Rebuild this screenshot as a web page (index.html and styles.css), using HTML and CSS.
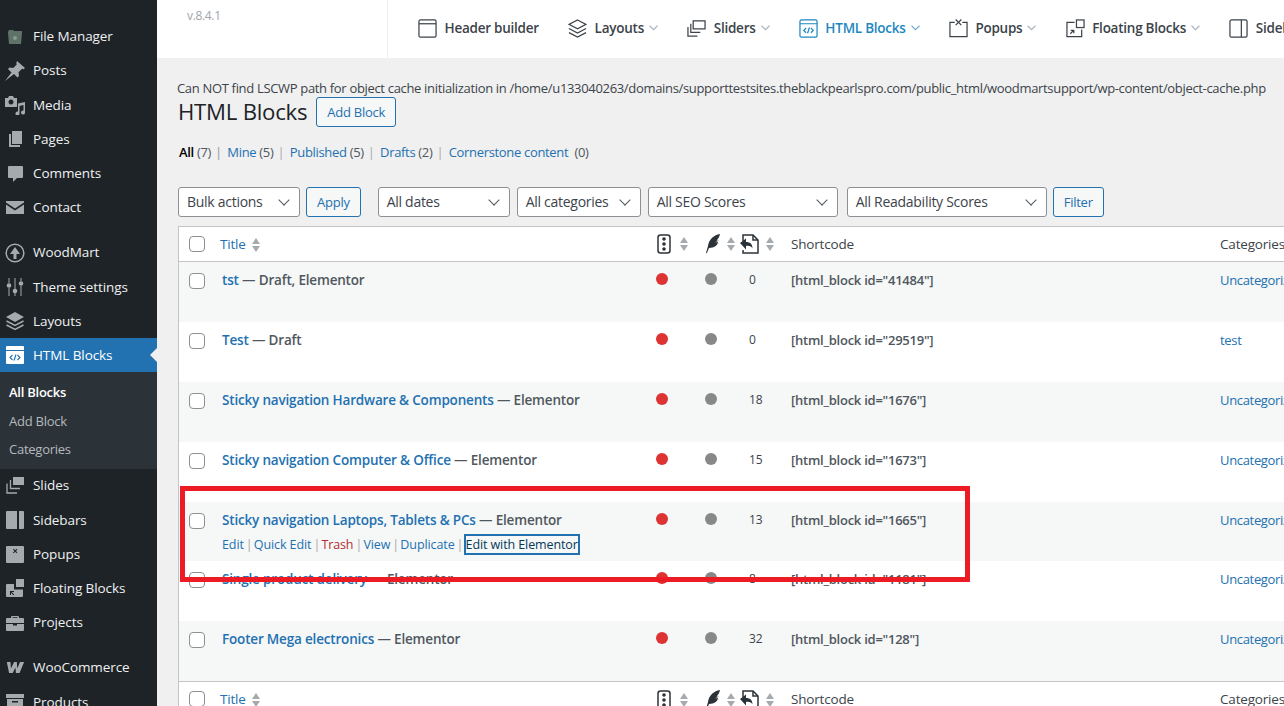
FILE: index.html
```html
<!DOCTYPE html>
<html lang="en">
<head>
<meta charset="utf-8">
<title>HTML Blocks</title>
<link rel="stylesheet" href="styles.css">
</head>
<body>
<div class="app">
  <nav class="side">
    <a class="mi"><svg class="ic" viewBox="0 0 20 20"><path fill="#5f7268" d="M3 5l1-2h4l1 1h8v2l-1 11H4L3 6z"/><circle cx="10" cy="11" r="2" fill="#8a9a90"/></svg>File Manager</a>
    <a class="mi"><svg class="ic" viewBox="0 0 20 20"><path d="M12 0l8 7-1.500 1.200-1.500-.4-3.500 3.500.5 3.700-1.500 1.500-3.500-3.500L0 20l6.500-8.500L3 8l1.500-1.500 3.700.5 3.500-3.500-.4-1.500z"/></svg>Posts</a>
    <a class="mi"><svg class="ic" viewBox="0 0 20 20"><path fill-rule="evenodd" d="M0 3h3l1-2h4l1 2h3v9H0zM6 4.500a2.500 2.500 0 1 0 .01 0z"/><path d="M20 7v10.500a2 2 0 1 1-1.500-1.900V10l-4 1v7.500a2 2 0 1 1-1.500-1.900V8.500z"/></svg>Media</a>
    <a class="mi"><svg class="ic" viewBox="0 0 20 20"><path d="M7 2h10v13H7z"/><path d="M4 5h2v11h9v2H4z"/></svg>Pages</a>
    <a class="mi"><svg class="ic" viewBox="0 0 20 20"><path d="M4 3h13a1 1 0 0 1 1 1v10a1 1 0 0 1-1 1h-5l-4 4v-4H4a1 1 0 0 1-1-1V4a1 1 0 0 1 1-1z"/></svg>Comments</a>
    <a class="mi"><svg class="ic" viewBox="0 0 20 20"><path d="M1 3h18v1.500l-9 6-9-6z"/><path d="M1 6.500l9 6 9-6V16H1z"/></svg>Contact</a>
    <a class="mi gap"><svg class="ic" viewBox="0 0 20 20"><circle cx="10" cy="10" r="8.800" fill="none" stroke="#a7aaad" stroke-width="1.500"/><path d="M10 4l5 7h-3.500v5h-3v-5H5z"/></svg>WoodMart</a>
    <a class="mi"><svg class="ic" viewBox="0 0 20 20"><path d="M3.500 1h1v5h-1zM9.500 1h1v11h-1zM15.500 1h1v3h-1zM3.500 11h1v8h-1zM9.500 16h1v3h-1zM15.500 9h1v10h-1z"/><circle cx="4" cy="8.500" r="2.300"/><circle cx="10" cy="14" r="2.300"/><circle cx="16" cy="6.500" r="2.300"/></svg>Theme settings</a>
    <a class="mi"><svg class="ic" viewBox="0 0 20 20"><path d="M10 1l9 5-9 5-9-5z"/><path fill="none" stroke="#a7aaad" stroke-width="1.500" d="M1.500 10l8.500 4.500 8.500-4.500M1.500 14l8.500 4.500 8.500-4.500"/></svg>Layouts</a>
    <a class="mi on"><svg class="ic" viewBox="0 0 20 20"><path fill="#fff" d="M2 1h16a1 1 0 0 1 1 1v3H1V2a1 1 0 0 1 1-1z"/><path fill="#fff" d="M1 6h18v12a1 1 0 0 1-1 1H2a1 1 0 0 1-1-1z"/><path fill="none" stroke="#2271b1" stroke-width="1.100" d="M7.500 10l-2.500 2.500 2.500 2.500M12.500 10l2.500 2.500-2.500 2.500M11 9.500l-2 6"/></svg>HTML Blocks</a>
    <div class="sub">
      <a class="si cur">All Blocks</a>
      <a class="si">Add Block</a>
      <a class="si">Categories</a>
    </div>
    <a class="mi"><svg class="ic" viewBox="0 0 20 20"><path d="M8 1h11v8H8z"/><path fill="none" stroke="#a7aaad" stroke-width="1.300" d="M5.500 4v8.500H15M2 7.500v9.500h10"/></svg>Slides</a>
    <a class="mi"><svg class="ic" viewBox="0 0 20 20"><path d="M2 1h10v18H2a1 1 0 0 1-1-1V2a1 1 0 0 1 1-1zM14 1h4a1 1 0 0 1 1 1v16a1 1 0 0 1-1 1h-4z"/></svg>Sidebars</a>
    <a class="mi"><svg class="ic" viewBox="0 0 20 20"><path fill-rule="evenodd" d="M2 2h16a1 1 0 0 1 1 1v15a1 1 0 0 1-1 1H2a1 1 0 0 1-1-1V3a1 1 0 0 1 1-1zm6 3.500l1.500 1.500L8 8.500l.7.7L10.200 7.700l1.500 1.500.7-.7L11 7l1.400-1.500-.7-.7-1.500 1.500L8.700 4.800z"/></svg>Popups</a>
    <a class="mi"><svg class="ic" viewBox="0 0 20 20"><path d="M11 1h8v8h-8z"/><path fill-rule="evenodd" d="M2 6h7v5.500h9V18a1 1 0 0 1-1 1H2a1 1 0 0 1-1-1V7a1 1 0 0 1 1-1zm3 7v4h1v-2.300l2.500 2.500.7-.7L6.700 14H9v-1z"/></svg>Floating Blocks</a>
    <a class="mi"><svg class="ic" viewBox="0 0 20 20"><path d="M7 3h6a1 1 0 0 1 1 1v1h4a1 1 0 0 1 1 1v4H1V6a1 1 0 0 1 1-1h4V4a1 1 0 0 1 1-1zm.500 1.300V5h5v-.700z"/><path d="M1 11h7v1.500h4V11h7v6a1 1 0 0 1-1 1H2a1 1 0 0 1-1-1z"/></svg>Projects</a>
    <a class="mi gap"><svg class="ic woo" viewBox="0 0 22 14"><path d="M2 1h4l.5 7L10 1h3l.5 7 3-7H21l-5 12h-4l-.5-6-3 6H4.500z"/></svg>WooCommerce</a>
    <a class="mi"><svg class="ic" viewBox="0 0 20 20"><path d="M1 2h18v4H1zM2 7h16v11H2zm5 2v1.500h6V9z" fill-rule="evenodd"/></svg>Products</a>
  </nav>
  <div class="main">
    <header class="top">
      <div class="ver">v.8.4.1</div>
      <div class="tabs">
        <a class="tab"><svg class="ti" viewBox="0 0 20 20"><rect x="1" y="1" width="18" height="18" rx="1.500"/><path d="M1 5h18"/></svg>Header builder</a>
        <a class="tab"><svg class="ti" viewBox="0 0 20 20"><path d="M10 1l9 4.700-9 4.700-9-4.700zM1 10l9 4.700 9-4.700M1 14.300L10 19l9-4.700"/></svg>Layouts<svg class="ch" viewBox="0 0 8 5"><path d="M.5.500L4 4 7.500.5"/></svg></a>
        <a class="tab"><svg class="ti" viewBox="0 0 20 20"><path d="M6.500 2h12.500v8.500H6.500zM4 5v9h10M1 8.500V18h10"/></svg>Sliders<svg class="ch" viewBox="0 0 8 5"><path d="M.5.500L4 4 7.500.5"/></svg></a>
        <a class="tab act"><svg class="ti" viewBox="0 0 20 20"><rect x="1" y="1" width="18" height="18" rx="1.500"/><path d="M1 5h18M7.500 9.500L5 12l2.500 2.500M12.500 9.500L15 12l-2.500 2.500M11 9l-2 6"/></svg>HTML Blocks<svg class="ch" viewBox="0 0 8 5"><path d="M.5.500L4 4 7.500.5"/></svg></a>
        <a class="tab"><svg class="ti" viewBox="0 0 20 20"><path d="M6 3.500H1v15h18v-15h-5M7 .5l6 6M13 .5l-6 6"/></svg>Popups<svg class="ch" viewBox="0 0 8 5"><path d="M.5.500L4 4 7.500.5"/></svg></a>
        <a class="tab"><svg class="ti" viewBox="0 0 20 20"><rect x="11" y="1" width="8" height="8"/><path d="M9 3.500H1v15h15.500V11M4.500 15.500l3.500-3.500M5 12h3.200v3"/></svg>Floating Blocks<svg class="ch" viewBox="0 0 8 5"><path d="M.5.500L4 4 7.500.5"/></svg></a>
        <a class="tab"><svg class="ti" viewBox="0 0 20 20"><rect x="1" y="1" width="18" height="18" rx="1.500"/><path d="M13 1v18"/></svg>Sidebars</a>
      </div>
    </header>
    <div class="content">
      <p class="notice">Can NOT find LSCWP path for object cache initialization in /home/u133040263/domains/supporttestsites.theblackpearlspro.com/public_html/woodmartsupport/wp-content/object-cache.php</p>
      <div class="head"><h1>HTML Blocks</h1><a class="btn add">Add Block</a></div>
      <ul class="views">
        <li class="cur">All <i>(7)</i></li>
        <li><a>Mine</a> <i>(5)</i></li>
        <li><a>Published</a> <i>(5)</i></li>
        <li><a>Drafts</a> <i>(2)</i></li>
        <li class="last"><a>Cornerstone content</a>&nbsp; <i>(0)</i></li>
      </ul>
      <div class="filters">
        <div class="sel w122">Bulk actions</div>
        <a class="btn">Apply</a>
        <div class="sel w132 ml11">All dates</div>
        <div class="sel w124 ml1">All categories</div>
        <div class="sel w190 ml1">All SEO Scores</div>
        <div class="sel w200 ml3">All Readability Scores</div>
        <a class="btn">Filter</a>
      </div>
      <table class="list">
        <colgroup><col class="c1"><col class="c2"><col class="c3"><col class="c4"><col class="c5"><col class="c6"><col class="c7"></colgroup>
        <thead><tr>
          <th class="cb"><span class="box"></span></th>
          <th><a>Title</a><span class="sort"></span></th>
          <th class="i1"><svg class="hi" viewBox="0 0 14 20"><rect x="1" y="1" width="12" height="18" rx="2.500"/><circle class="d" cx="7" cy="5" r="1.800"/><circle class="d" cx="7" cy="10" r="1.800"/><circle class="d" cx="7" cy="15" r="1.800"/></svg><span class="sort"></span></th>
          <th class="i2"><svg class="hi" viewBox="0 0 16 20"><path class="d" d="M15 0C9 1 4 5 3 12l-2 7 .8.3L4 14c5 0 9-3 9-6l-3 .5 4-2-2.500.2C13 5 14.500 3 15 0z"/></svg><span class="sort"></span></th>
          <th class="i3"><svg class="hi hw" viewBox="0 0 20 20"><path d="M3 7V1h10l5 5v13H3v-3"/><path d="M13 1v5h5"/><path class="d" d="M0 9l6-4.500V8c4 0 6.500 2 6.500 6.500-1-2-3-3-6.500-2.500v3.500z"/></svg><span class="sort"></span></th>
          <th>Shortcode</th>
          <th>Categories</th>
        </tr></thead>
        <tbody>
          <tr class="alt"><td class="cb"><span class="box"></span></td><td class="tt"><a class="t">tst</a> <b>— Draft, Elementor</b></td><td class="dot"><span class="r"></span></td><td class="dot"><span class="g"></span></td><td class="n">0</td><td class="sc">[html_block id="41484"]</td><td class="cat"><a>Uncategorized</a></td></tr>
          <tr><td class="cb"><span class="box"></span></td><td class="tt"><a class="t">Test</a> <b>— Draft</b></td><td class="dot"><span class="r"></span></td><td class="dot"><span class="g"></span></td><td class="n">0</td><td class="sc">[html_block id="29519"]</td><td class="cat"><a>test</a></td></tr>
          <tr class="alt"><td class="cb"><span class="box"></span></td><td class="tt"><a class="t">Sticky navigation Hardware &amp; Components</a> <b>— Elementor</b></td><td class="dot"><span class="r"></span></td><td class="dot"><span class="g"></span></td><td class="n">18</td><td class="sc">[html_block id="1676"]</td><td class="cat"><a>Uncategorized</a></td></tr>
          <tr><td class="cb"><span class="box"></span></td><td class="tt"><a class="t">Sticky navigation Computer &amp; Office</a> <b>— Elementor</b></td><td class="dot"><span class="r"></span></td><td class="dot"><span class="g"></span></td><td class="n">15</td><td class="sc">[html_block id="1673"]</td><td class="cat"><a>Uncategorized</a></td></tr>
          <tr class="alt hov"><td class="cb"><span class="box"></span></td><td class="tt"><a class="t">Sticky navigation Laptops, Tablets &amp; PCs</a> <b>— Elementor</b>
            <div class="acts"><a>Edit</a><s>|</s><a>Quick Edit</a><s>|</s><a class="trash">Trash</a><s>|</s><a>View</a><s>|</s><a>Duplicate</a><s>|</s><a class="focus">Edit with Elementor</a></div></td><td class="dot"><span class="r"></span></td><td class="dot"><span class="g"></span></td><td class="n">13</td><td class="sc">[html_block id="1665"]</td><td class="cat"><a>Uncategorized</a></td></tr>
          <tr><td class="cb"><span class="box"></span></td><td class="tt"><a class="t">Single product delivery</a> <b>— Elementor</b></td><td class="dot"><span class="r"></span></td><td class="dot"><span class="g"></span></td><td class="n">8</td><td class="sc">[html_block id="1181"]</td><td class="cat"><a>Uncategorized</a></td></tr>
          <tr class="alt"><td class="cb"><span class="box"></span></td><td class="tt"><a class="t">Footer Mega electronics</a> <b>— Elementor</b></td><td class="dot"><span class="r"></span></td><td class="dot"><span class="g"></span></td><td class="n">32</td><td class="sc">[html_block id="128"]</td><td class="cat"><a>Uncategorized</a></td></tr>
        </tbody>
        <tfoot><tr>
          <th class="cb"><span class="box"></span></th>
          <th><a>Title</a><span class="sort"></span></th>
          <th class="i1"><svg class="hi" viewBox="0 0 14 20"><rect x="1" y="1" width="12" height="18" rx="2.500"/><circle class="d" cx="7" cy="5" r="1.800"/><circle class="d" cx="7" cy="10" r="1.800"/><circle class="d" cx="7" cy="15" r="1.800"/></svg><span class="sort"></span></th>
          <th class="i2"><svg class="hi" viewBox="0 0 16 20"><path class="d" d="M15 0C9 1 4 5 3 12l-2 7 .8.3L4 14c5 0 9-3 9-6l-3 .5 4-2-2.500.2C13 5 14.500 3 15 0z"/></svg><span class="sort"></span></th>
          <th class="i3"><svg class="hi hw" viewBox="0 0 20 20"><path d="M3 7V1h10l5 5v13H3v-3"/><path d="M13 1v5h5"/><path class="d" d="M0 9l6-4.500V8c4 0 6.500 2 6.500 6.500-1-2-3-3-6.500-2.500v3.500z"/></svg><span class="sort"></span></th>
          <th>Shortcode</th>
          <th>Categories</th>
        </tr></tfoot>
      </table>
    </div>
  </div>
  <div class="mark"></div>
</div>
</body>
</html>
```
FILE: styles.css
```css
* { box-sizing: border-box; }
html, body { margin: 0; height: 706px; overflow: hidden; }
body { font: 13px/1.4 "Open Sans", "Noto Sans", sans-serif; color: #3c434a; background: #f0f0f0; letter-spacing: -.33px; }
a { color: #2271b1; text-decoration: none; }
.app { position: relative; display: flex; width: 1284px; height: 706px; overflow: hidden; }
.side { flex: 0 0 157px; background: #1d2327; padding-top: 19.6px; }
.mi { display: flex; align-items: center; height: 34.2px; padding-left: 5px; color: #f0f0f1; font-size: 13.5px; letter-spacing: -.08px; }
.mi.gap { margin-top: 11px; }
.mi.on { background: #2271b1; color: #fff; position: relative; }
.mi.on::after { content: ""; position: absolute; right: 0; top: 10px; border: 7px solid transparent; border-right-color: #f0f0f1; border-left: 0; }
.ic { width: 20px; height: 20px; margin-right: 8px; fill: #a7aaad; flex: none; }
.woo { height: 13px; }
.sub { background: #2c3338; padding: 6px 0 5.8px; }
.si { display: flex; align-items: center; height: 28.2px; padding-left: 9px; color: #b4b9be; font-size: 13px; letter-spacing: -.25px; }
.si.cur { color: #fff; font-weight: 600; }
.main { flex: 1; min-width: 0; display: flex; flex-direction: column; }
.top { flex: 0 0 58px; background: #fff; display: flex; }
.ver { flex: 0 0 231px; border-right: 1px solid #eee; padding: 8px 0 0 30px; font-size: 12px; color: #a0a5aa; }
.tabs { display: flex; flex: none; gap: 29.3px; padding-left: 30px; align-items: center; height: 56px; }
.tab { display: flex; align-items: center; color: #3c434a; font-weight: 600; font-size: 13.5px; white-space: nowrap; letter-spacing: -.25px; }
.tab.act { color: #1e87c0; }
.ti { width: 19px; height: 19px; margin-right: 7.5px; fill: none; stroke: #3c434a; stroke-width: 1.300; }
.act .ti { stroke: #1e87c0; }
.ch { width: 9px; height: 6px; margin-left: 5px; fill: none; stroke: #a9b4bc; stroke-width: 1; }
.act .ch { stroke: #6eb0d6; }
.content { padding: 0 0 0 21px; width: 1140px; }
.notice { margin: 20px 0 0 -1px; font-size: 13px; line-height: 20px; white-space: nowrap; letter-spacing: -.325px; }
.head { display: flex; align-items: center; gap: 9px; height: 30px; margin-top: -1px; }
h1 { margin: 0; font-size: 22.2px; font-weight: 400; color: #1d2327; line-height: 30px; letter-spacing: -.25px; }
.btn { display: inline-flex; align-items: center; justify-content: center; height: 30px; padding: 0 10px; border: 1px solid #2271b1; border-radius: 3px; background: #f6f7f7; color: #2271b1; letter-spacing: -.25px; }
.views { list-style: none; display: flex; margin: 15px 0 0; padding: 0 0 0 1px; height: 20px; line-height: 20px; }
.views li::after { content: "|"; color: #a7aaad; margin: 0 5.5px 0 4px; }
.views li.last::after { content: none; }
.views li.cur { color: #000; font-weight: 600; }
.views i { font-style: normal; font-weight: 400; color: #50575e; }
.filters { display: flex; gap: 6px; margin-top: 25px; height: 30px; }
.sel { height: 30px; padding-left: 8px; border: 1px solid #8c8f94; border-radius: 3px; background: #fff; line-height: 28px; position: relative; font-size: 14px; letter-spacing: -.28px; }
.sel::after { content: ""; position: absolute; right: 11px; top: 8px; width: 7px; height: 7px; border-right: 1.5px solid #50575e; border-bottom: 1.5px solid #50575e; transform: rotate(45deg); }
.w122 { width: 122px; } .w132 { width: 132px; } .w124 { width: 124px; } .w190 { width: 190px; } .w200 { width: 200px; }
.ml11 { margin-left: 11px; } .ml1 { margin-left: 1px; } .ml3 { margin-left: 3px; }
.list { margin-top: 9px; width: 1140px; table-layout: fixed; border-collapse: separate; border-spacing: 0; background: #fff; border: 1px solid #c3c4c7; border-right: 0; }
.c1 { width: 33px; } .c2 { width: 444px; } .c3 { width: 49px; } .c4 { width: 35px; } .c5 { width: 43px; } .c6 { width: 429px; } .c7 { width: 107px; }
th { height: 35px; text-align: left; font-weight: 400; font-size: 13.5px; letter-spacing: -.18px; padding: 0 0 0 8px; white-space: nowrap; border-bottom: 1px solid #c3c4c7; }
tfoot th { border-bottom: 0; border-top: 1px solid #c3c4c7; padding-top: 1px; }
td { height: 60px; vertical-align: top; padding: 9px 0 0 8px; white-space: nowrap; }
.cb { padding: 0 0 0 10px; }
td.cb { padding-top: 11px; }
.box { display: block; width: 16px; height: 16px; border: 1px solid #8c8f94; border-radius: 4px; background: #fff; }
.alt td { background: #f6f7f7; }
.hov td { height: 59px; }
.tt { padding-left: 10px; font-size: 13.5px; letter-spacing: -.18px; }
.t { font-weight: 600; }
b { font-weight: 600; color: #50575e; }
.cat { font-size: 13px; letter-spacing: -.33px; }
.acts { display: flex; align-items: center; gap: 4px; margin-top: 5px; font-size: 12.5px; line-height: 19px; letter-spacing: -.1px; }
.acts s { display: block; width: 2px; text-decoration: none; color: #a7aaad; text-indent: -2px; }
.trash { color: #b32d2e; }
.focus { display: block; color: #043959; outline: 2px solid #2271b1; outline-offset: -1px; padding: 0 1px; height: 19px; }
.sort { display: inline-block; vertical-align: middle; margin-left: 6px; width: 9px; height: 14px; position: relative; }
.sort::before, .sort::after { content: ""; position: absolute; left: 0; width: 0; height: 0; border-left: 4.5px solid transparent; border-right: 4.5px solid transparent; }
.sort::before { top: 0; border-bottom: 6px solid #a7aaad; }
.sort::after { bottom: 0; border-top: 6px solid #a7aaad; }
.i1, .i2, .i3 { padding-left: 0; }
.i1 .sort { margin-left: 8px; }
.hi { width: 16px; height: 20px; vertical-align: middle; fill: none; stroke: #2c3338; stroke-width: 1.500; }
.hi .d { fill: #2c3338; stroke: none; }
.hw { width: 20px; }
.dot span { display: block; width: 12px; height: 12px; border-radius: 50%; }
td.dot { padding: 11px 0 0 0; }
.r { background: #dd3333; }
.g { background: #888; }
.n { padding-left: 9px; padding-top: 10px; font-size: 12px; letter-spacing: -.1px; }
.sc { font-weight: 600; font-size: 13px; letter-spacing: -.25px; color: #50575e; }
.mark { position: absolute; left: 180px; top: 486px; width: 790px; height: 96px; border: 5px solid #ed1c24; }
```
